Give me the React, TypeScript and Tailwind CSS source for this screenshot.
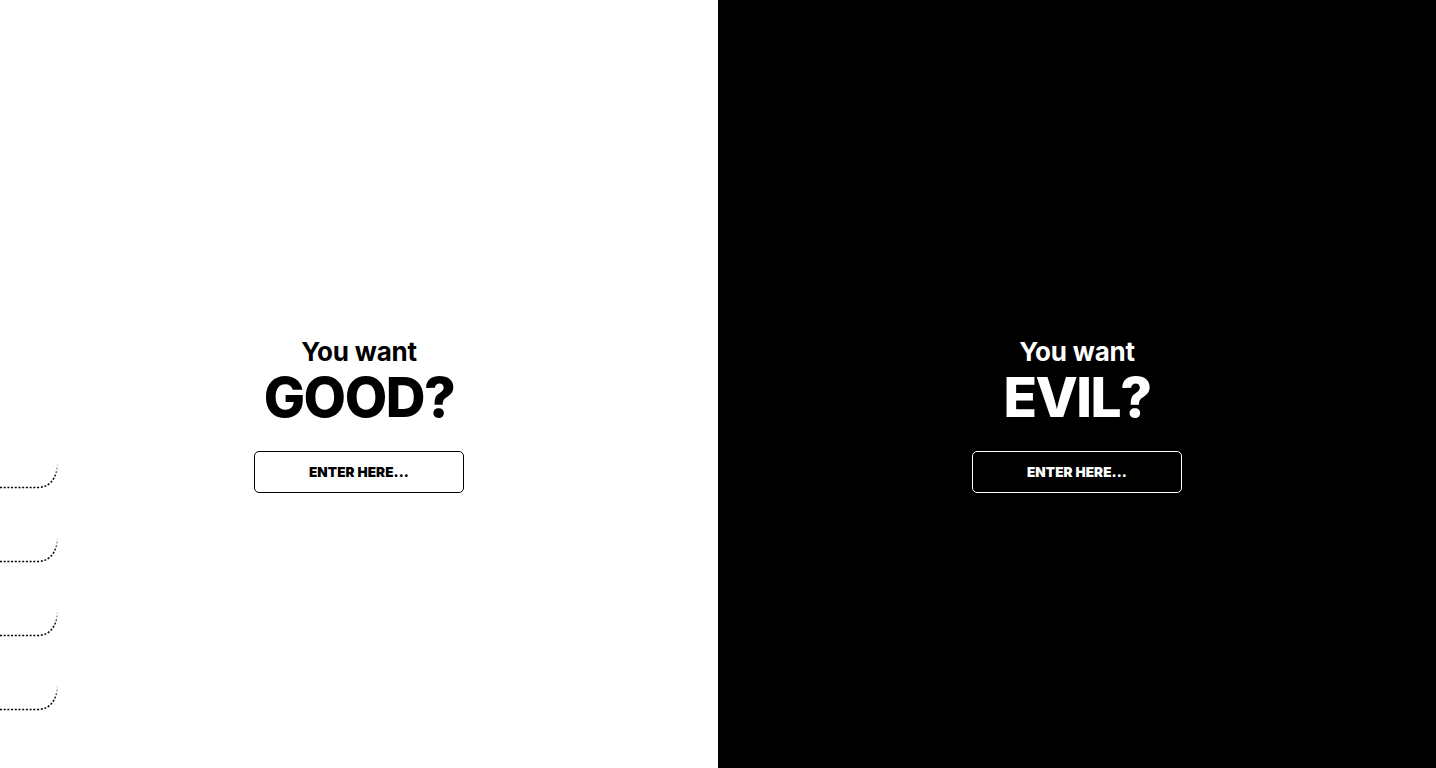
import React from 'react';

const font = { fontFamily: 'Inter, "Noto Sans", sans-serif' };

const DottedCurve: React.FC = () => (
  <svg width="60" height="26" viewBox="0 0 60 26" fill="none">
    <defs>
      <linearGradient id="fade" x1="0" y1="26" x2="0" y2="0" gradientUnits="userSpaceOnUse">
        <stop offset="0" stopColor="#000" />
        <stop offset="0.45" stopColor="#000" />
        <stop offset="1" stopColor="#000" stopOpacity="0" />
      </linearGradient>
    </defs>
    <path
      d="M0 24.5 H37 C49 24.5 56.5 17 57.5 1"
      stroke="url(#fade)"
      strokeWidth="1.5"
      strokeDasharray="2 1.7"
    />
  </svg>
);

const Side: React.FC<{ word: string; dark?: boolean }> = ({ word, dark }) => (
  <div className="flex flex-col items-center pt-[64px]" style={font}>
    <h2
      className={`text-[26px] leading-none font-bold tracking-[-0.2px] ${dark ? 'text-white' : 'text-black'}`}
    >
      You want
    </h2>
    <h1
      className={`mt-[5px] text-[55px] leading-none font-extrabold tracking-[-1.5px] ${dark ? 'text-white' : 'text-black'}`}
    >
      {word}
    </h1>
    <button
      className={`mt-[26px] w-[210px] h-[42px] rounded-[5px] border text-[13.5px] font-black tracking-[0.1px] pt-[1px] ${
        dark ? 'border-white text-white bg-black' : 'border-black text-black bg-white'
      }`}
    >
      ENTER HERE...
    </button>
  </div>
);

const App: React.FC = () => {
  return (
    <div className="flex w-full h-screen overflow-hidden">
      <div className="relative flex-1 bg-white flex items-center justify-center">
        <div className="absolute left-0 top-[463px] flex flex-col gap-[48px]">
          <DottedCurve />
          <DottedCurve />
          <DottedCurve />
          <DottedCurve />
        </div>
        <Side word="GOOD?" />
      </div>
      <div className="flex-1 bg-black flex items-center justify-center">
        <Side word="EVIL?" dark />
      </div>
    </div>
  );
};

export default App;
